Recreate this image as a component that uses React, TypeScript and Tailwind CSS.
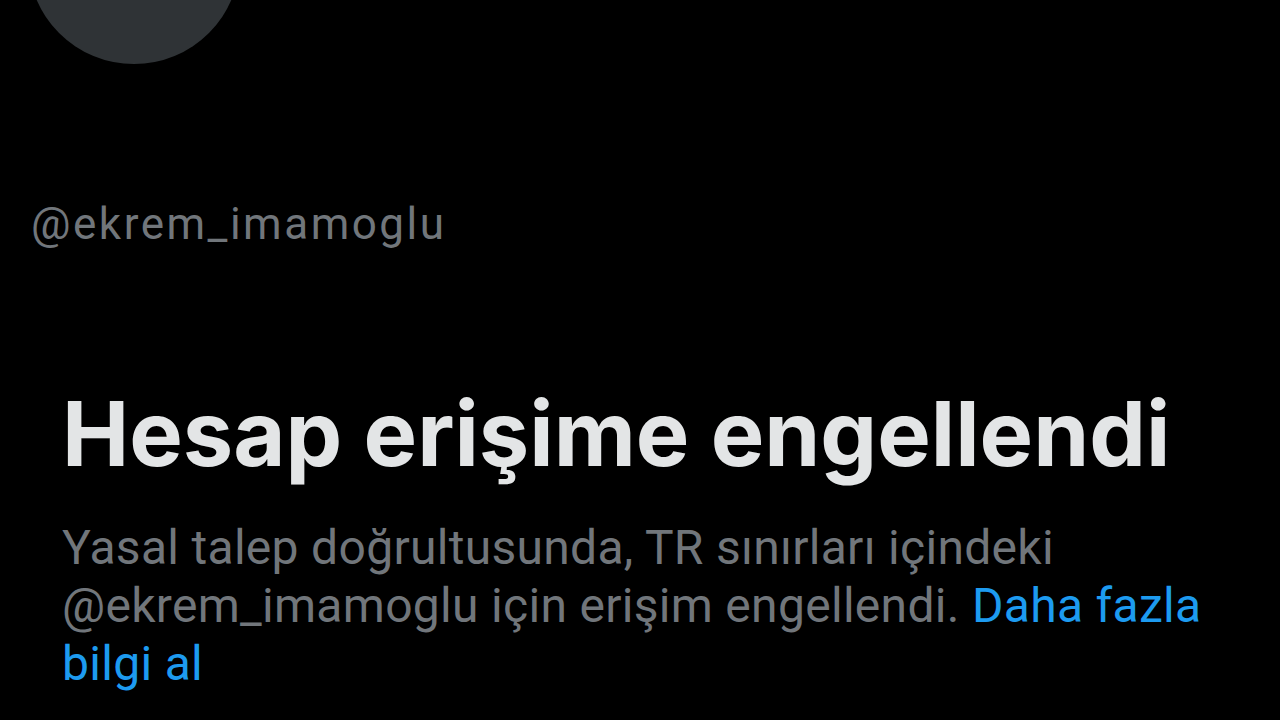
import React from 'react';

const App = () => {
  return (
    <div className="w-[1280px] h-[720px] bg-black overflow-hidden flex flex-col">
      {/* avatar */}
      <div className="ml-[28px] mt-[-148px] w-[212px] h-[212px] shrink-0 rounded-full bg-[#2f3336]" />

      <p className="ml-[31px] mt-[136px] text-[44px] leading-[48px] tracking-[2.5px] text-[#71767b] font-['Roboto',sans-serif]">
        @ekrem_imamoglu
      </p>

      <h1 className="ml-[62px] mt-[141px] text-[90px] leading-[90px] font-bold text-[#e3e5e6] font-['Inter',sans-serif]">
        Hesap erişime engellendi
      </h1>

      <p className="ml-[62px] mt-[40px] w-[1160px] text-[48px] leading-[58px] tracking-[0.3px] text-[#71767b] font-['Roboto',sans-serif]">
        Yasal talep doğrultusunda, TR sınırları içindeki @ekrem_imamoglu için erişim engellendi.{' '}
        <span className="text-[#1d9bf0]">Daha fazla bilgi al</span>
      </p>
    </div>
  );
};

export default App;
